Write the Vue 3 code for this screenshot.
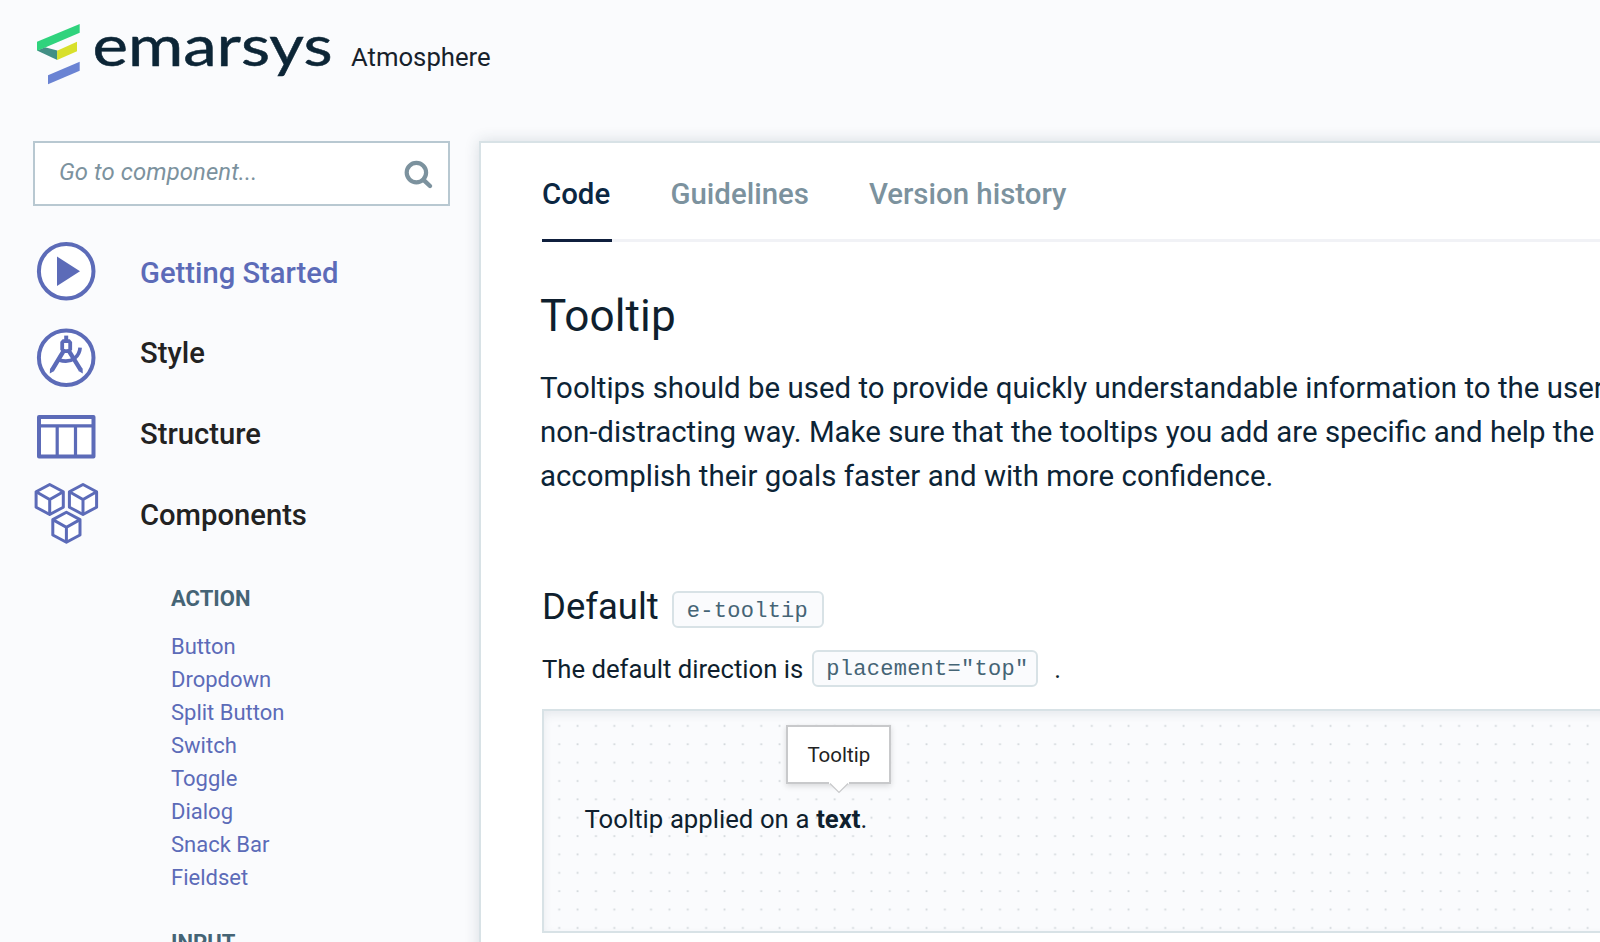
<script setup>
const actions = ['Button', 'Dropdown', 'Split Button', 'Switch', 'Toggle', 'Dialog', 'Snack Bar', 'Fieldset']
const tabs = ['Code', 'Guidelines', 'Version history']
const cubes = [[49.7, 499.5], [83, 499.5], [66.4, 527.3]]
</script>

<template>
  <div class="page">
    <header class="header">
      <svg class="logo" width="300" height="80" viewBox="35 14 300 80">
        <path d="M37 50.5 45 47.3 57.3 50.5 57.3 60z" fill="#428f85" />
        <path d="M37 41.8 79.7 24v8.7L46.3 47 37 50.7z" fill="#2fd37d" />
        <path d="M57.1 50.7 77 41.8v9.4L57.1 60z" fill="#d8e02c" />
        <path d="M48 75.2 79.7 61.8v9L48 84.3z" fill="#6a83d3" />
        <text x="92.5" y="66" textLength="240" lengthAdjust="spacingAndGlyphs" class="wordmark">emarsys</text>
      </svg>
      <span class="product">Atmosphere</span>
    </header>

    <div class="body">
      <aside class="sidebar">
        <div class="search">
          <span>Go to component...</span>
          <svg width="34" height="34" viewBox="401 158 34 34">
            <circle cx="416.4" cy="172.6" r="9.7" fill="none" stroke="#7c929e" stroke-width="4.2" />
            <path d="M423.5 179.8 430 186" stroke="#7c929e" stroke-width="4.4" stroke-linecap="round" />
          </svg>
        </div>

        <nav>
          <a class="item active">
            <svg viewBox="33 232.6 68 80.83">
              <circle class="box" cx="66.2" cy="271.8" r="27.3" />
              <path d="M57 257v29.6L80 271.8z" class="solid" />
            </svg>
            Getting Started
          </a>
          <a class="item">
            <svg viewBox="33 313.4 68 80.83">
              <circle class="box" cx="66.2" cy="358.1" r="27.3" />
              <path d="M66.2 336v5" stroke-width="4" />
              <path d="M62.2 343 63.5 341.5h5.4l1.3 1.5v6.5L68 351.5h-3.6l-2.2-2z" stroke-width="3.8" />
              <path d="M63.5 351.5 52 370.5M69 351.500 80.800 370.500" stroke-width="4.400" />
              <path d="M50 369 54.200 371.500 49.800 374zM78.500 371.500 82.600 369 82.800 374z" class="solid" />
              <path d="M59 360.300q9 3 15.500-1.500 5.200-4.200 5.600-10.800" stroke-width="3.700" />
            </svg>
            Style
          </a>
          <a class="item">
            <svg viewBox="33 394.2 68 80.83">
              <path class="box" d="M39 417.200H93.500V456.800H39z" stroke-linejoin="round" />
              <path d="M39 426H94M57.200 426v31M75.500 426v31" stroke-width="3.200" />
            </svg>
            Structure
          </a>
          <a class="item">
            <svg viewBox="33 475 68 80.83">
              <g v-for="(c, i) in cubes" :key="i" :transform="`translate(${c[0]} ${c[1]})`">
                <path class="box" d="M0-15 13.600-7.700V7.700L0 15-13.600 7.700V-7.700z" stroke-width="3" stroke-linejoin="round" />
                <path d="M-13.600-7.700 0 0 13.600-7.700M0 0V15" stroke-width="3" />
              </g>
            </svg>
            Components
          </a>
        </nav>

        <div class="group">
          <h4>ACTION</h4>
          <a v-for="a in actions" :key="a">{{ a }}</a>
        </div>
        <div class="group">
          <h4>INPUT</h4>
        </div>
      </aside>

      <main class="card">
        <div class="tabs">
          <a v-for="(t, i) in tabs" :key="t" :class="['tab', { current: i === 0 }]">{{ t }}</a>
        </div>
        <h1>Tooltip</h1>
        <p class="lead">Tooltips should be used to provide quickly understandable information to the users in a<br>non-distracting way. Make sure that the tooltips you add are specific and help the<br>accomplish their goals faster and with more confidence.</p>
        <div class="heading">
          <h2>Default</h2>
          <code>e-tooltip</code>
        </div>
        <div class="direction">
          <span>The default direction is</span>
          <code>placement="top"</code>
          <span class="stop">.</span>
        </div>
        <section class="demo">
          <svg class="dots" width="1100" height="220">
            <defs>
              <pattern id="grid" x="6" y="7" width="18.365" height="18.365" patternUnits="userSpaceOnUse">
                <rect x="8.300" y="7" width="1.840" height="1.840" fill="#d3d8dc" />
              </pattern>
            </defs>
            <rect width="1100" height="220" fill="url(#grid)" />
          </svg>
          <p>Tooltip applied on a <b>text<span class="tip">Tooltip<svg width="22" height="13" viewBox="0 0 22 13"><path d="M1 0h20v2H19.500L11 10.500 2.500 2H1z" fill="#fff" /><path d="M2 1.500 11 10.500 20 1.500" fill="none" stroke="#c8c9cb" stroke-width="1.200" /></svg></span></b>.</p>
        </section>
      </main>
    </div>
  </div>
</template>

<style>
body { margin: 0; overflow: hidden; background: #fafbfd; }
</style>

<style scoped>
* { box-sizing: border-box; }
.page { width: 1600px; height: 942px; overflow: hidden; background: #fafbfd; font-family: Roboto, sans-serif; color: #0f1f2e; display: flex; flex-direction: column; }
h1, h2, h4, p { margin: 0; font-weight: 400; }
.header { flex: none; height: 141px; display: flex; padding: 14px 0 0 35px; }
.logo { flex: none; overflow: visible; }
.wordmark { font: 400 56px Lato, sans-serif; fill: #0c2536; stroke: #0c2536; stroke-width: .5px; }
.product { margin-left: 16px; margin-top: 23px; font-size: 25.7px; line-height: 40px; height: 40px; white-space: nowrap; color: #17212b; }
.body { flex: 1; display: flex; min-height: 0; }
.sidebar { width: 479px; padding-left: 33px; flex: none; }
.search { width: 417px; height: 65px; border: 2px solid #b8c8d1; background: #fff; display: flex; justify-content: space-between; padding: 0 13px 0 24px; align-items: flex-start; color: #7c929e; font-size: 23.9px; font-style: italic; }
.search span { line-height: 34px; margin-top: 12px; letter-spacing: .08px; }
.search svg { margin-top: 15px; }
nav { padding-top: 26.2px; }
.item { display: flex; height: 80.83px; align-items: center; font-size: 29.2px; font-weight: 500; color: #222; white-space: nowrap; }
.item svg { width: 68px; height: 80.83px; margin-right: 39px; fill: none; stroke: #5c6bb8; stroke-width: 4px; flex: none; }
.item svg .box { fill: #fff; }
.item svg .solid { fill: #5c6bb8; stroke: none; }
.item.active { color: #5c6bb8; }
.group { padding-left: 138px; display: flex; flex-direction: column; height: 344.3px; padding-top: 26.4px; font-size: 22px; line-height: 33.07px; color: #5c6bb8; }
.group h4 { font-size: 22px; font-weight: 700; color: #456475; margin-bottom: 15px; line-height: 33.07px; }
.card { width: 1160px; flex: none; height: 830px; border: 2px solid #d8e2e6; background: #fff; box-shadow: 0 0 14px rgba(40, 60, 80, .16); padding-left: 61px; }
.tabs { display: flex; height: 99px; border-bottom: 3px solid #f1f2f6; gap: 60px; }
.tab { height: 99px; padding-top: 31px; font-size: 29.4px; line-height: 40px; font-weight: 500; color: #7c929e; white-space: nowrap; }
.tab.current { width: 69.5px; margin-right: -1px; color: #0b2742; border-bottom: 3px solid #0f1f3d; }
h1 { font-size: 44.1px; line-height: 60px; margin: 44px 0 0 -2px; letter-spacing: .1px; }
.lead { font-size: 29.4px; line-height: 44px; margin: 20px 0 0 -2px; white-space: nowrap; color: #0c2436; word-spacing: .12px; }
.heading { display: flex; margin-top: 83px; align-items: flex-start; height: 60px; }
h2 { font-size: 36.5px; line-height: 50px; margin-top: 1px; }
code { display: block; font: 22px "Liberation Mono", monospace; letter-spacing: .27px; line-height: 37px; height: 37px; border: 2px solid #d8e2e6; border-radius: 6px; background: #fafbfd; color: #456475; padding: 0 13px; }
.heading code { margin: 10px 0 0 13px; width: 152px; }
.direction { display: flex; height: 68px; font-size: 25.7px; line-height: 36px; white-space: nowrap; }
.direction code { margin: 9px 0 0 9px; width: 226px; padding-left: 12px; line-height: 36px; }
.direction span { margin-top: 9.5px; }
.direction .stop { margin-left: 16px; }
.demo { position: relative; width: 1110px; height: 224px; border: 2px solid #d8e2e6; background: #fafbfd; box-shadow: inset 0 4px 8px rgba(40, 70, 90, .09); padding: 90px 0 0 40.5px; }
.dots { position: absolute; left: 0; top: 0; }
.demo p { position: relative; font-size: 25.7px; line-height: 36px; white-space: nowrap; word-spacing: .3px; }
.demo b { position: relative; font-weight: 700; }
.tip { position: absolute; left: 50%; bottom: 50px; margin-left: -52px; width: 105px; height: 59px; border: 2px solid #c8c9cb; background: #fff; box-shadow: 0 2px 6px rgba(0, 0, 0, .14); font-size: 20.5px; font-weight: 400; line-height: 56px; text-align: center; color: #222; }
.tip svg { position: absolute; left: 40px; top: 54.500px; }
</style>
